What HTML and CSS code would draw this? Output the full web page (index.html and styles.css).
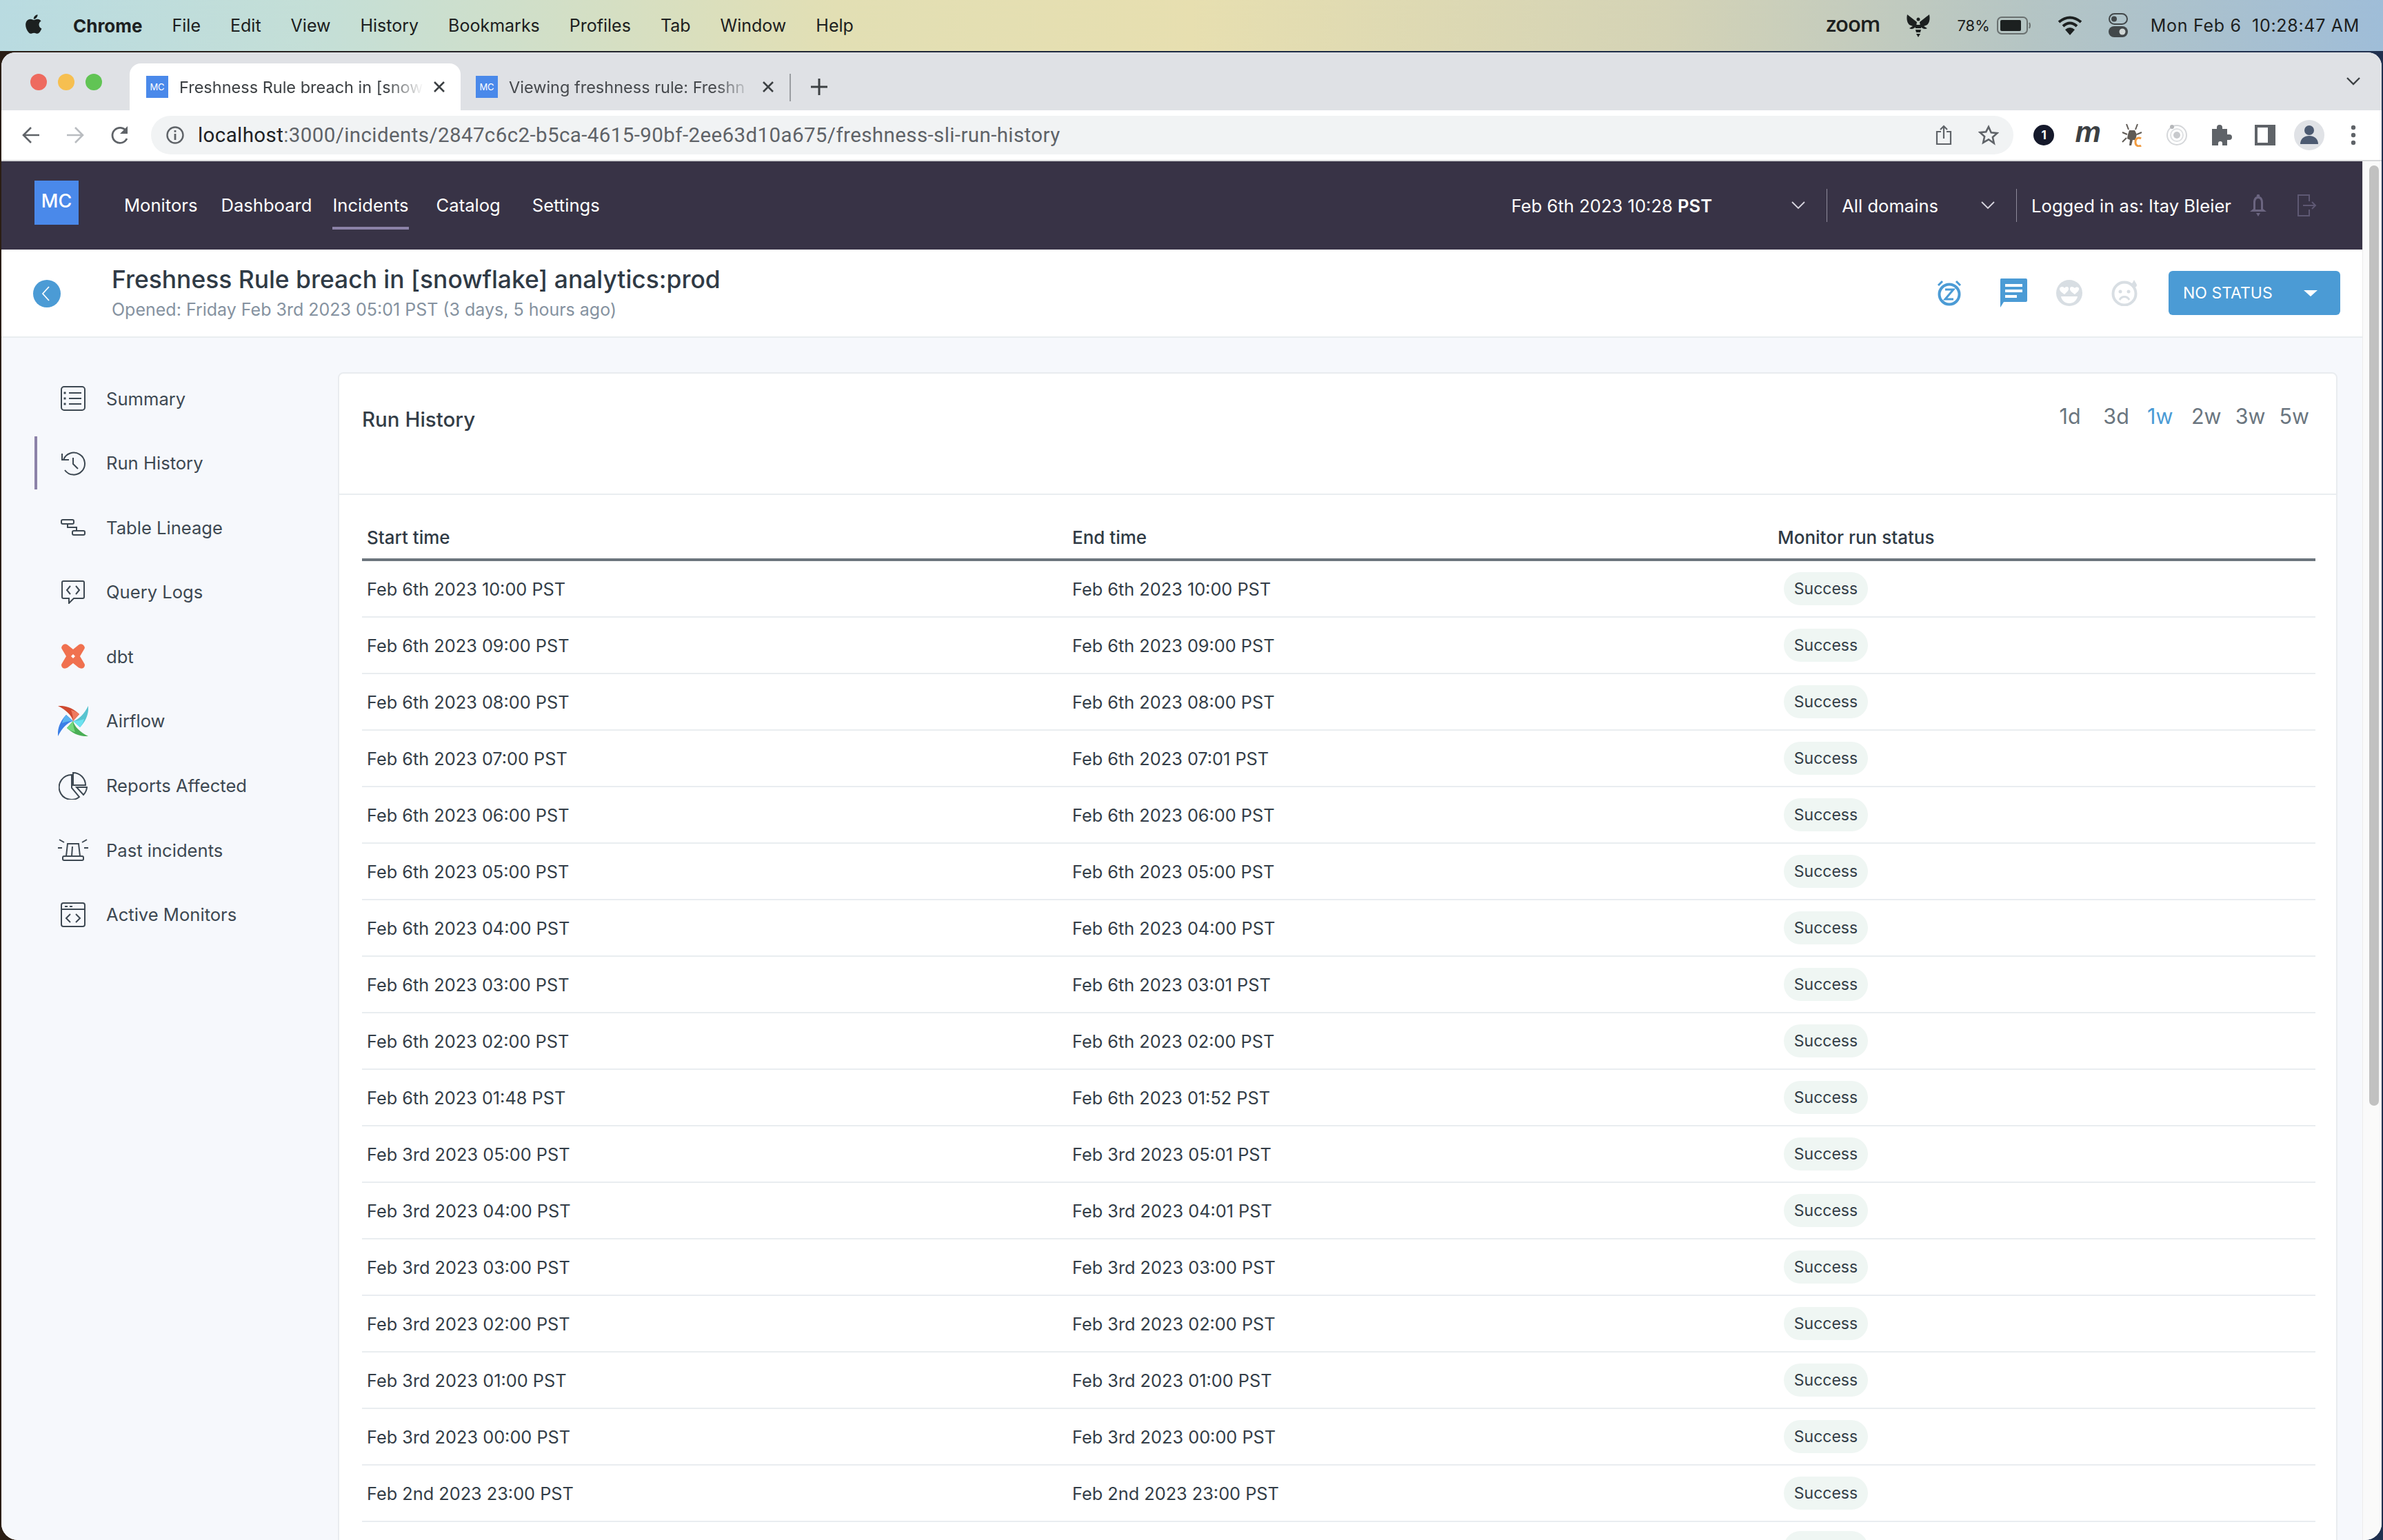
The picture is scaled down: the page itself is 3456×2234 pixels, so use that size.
FILE: index.html
```html
<!DOCTYPE html>
<html lang="en">
<head>
    <meta charset="UTF-8">
    <title>Freshness Rule breach in [snowflake] analytics:prod</title>
    <link rel="stylesheet" href="styles.css">
</head>
<body>
<div class="menubar">
    <div class="menu-left">
        <svg class="apple" width="30" height="36" viewBox="3 2.5 17 19"><path fill="#1c2020" d="M17.05 20.28c-.98.95-2.05.8-3.08.35-1.09-.46-2.09-.48-3.24 0-1.44.62-2.2.44-3.06-.35C2.79 15.25 3.51 7.59 9.05 7.31c1.35.07 2.29.74 3.08.8 1.18-.24 2.31-.93 3.57-.84 1.51.12 2.65.72 3.4 1.8-3.12 1.87-2.38 5.98.48 7.13-.57 1.5-1.31 2.99-2.54 4.09zM12.03 7.25c-.15-2.23 1.66-4.07 3.74-4.25.29 2.58-2.34 4.5-3.74 4.25z"/></svg>
        <b>Chrome</b><span>File</span><span>Edit</span><span>View</span><span>History</span><span>Bookmarks</span><span>Profiles</span><span>Tab</span><span>Window</span><span>Help</span>
    </div>
    <div class="menu-right">
        <span class="zoom-word">zoom</span>
        <svg width="36" height="36" viewBox="0 0 36 36"><path fill="#1c2020" d="M16 13 L2 2 Q0 12 5 17 L10 19 L5 22 Q10 25 15 19 Z M20 13 L34 2 Q36 12 31 17 L26 19 L31 22 Q26 25 21 19 Z"/><circle cx="18" cy="9" r="2.5" fill="#1c2020"/><path fill="#1c2020" d="M13 17h10l-1 5h-8zM14 24h8l-1 4h-6zM15 30h6l-3 5z"/></svg>
        <span class="battery-pct">78%</span>
        <svg width="50" height="26" viewBox="0 0 50 26"><rect x="1" y="1" width="43" height="24" rx="6" fill="none" stroke="#69706f" stroke-width="2"/><rect x="5" y="5" width="30" height="16" rx="2" fill="#1c2020"/><path d="M47 9 Q49 13 47 17" stroke="#69706f" stroke-width="2" fill="none"/></svg>
        <svg width="36" height="30" viewBox="0 0 36 30"><path fill="none" stroke="#1c2020" stroke-width="4" d="M2 10 Q18 -3 34 10M8 16 Q18 7 28 16"/><path fill="#1c2020" d="M18 29 L11 21 Q18 15 25 21Z"/></svg>
        <svg width="28" height="36" viewBox="0 0 28 36"><rect x="1" y="1" width="26" height="15" rx="7.5" fill="none" stroke="#42484a" stroke-width="2"/><circle cx="8" cy="8.5" r="4" fill="#42484a"/><rect y="19" width="28" height="16" rx="8" fill="#42484a"/><circle cx="20" cy="27" r="4.5" fill="#cfd6d5"/></svg>
        <span class="clock">Mon Feb 6&nbsp; 10:28:47 AM</span>
    </div>
</div>

<div class="window">
    <div class="tabstrip">
        <div class="lights"><i class="red"></i><i class="yellow"></i><i class="green"></i></div>
        <div class="tab tab-active">
            <span class="favicon">MC</span>
            <span class="tab-title">Freshness Rule breach in [snow</span>
            <svg class="tab-x" width="18" height="18" viewBox="0 0 18 18"><path stroke="#3c4043" stroke-width="2.6" d="M2 2l14 14M16 2L2 16"/></svg>
        </div>
        <div class="tab tab-back">
            <span class="favicon">MC</span>
            <span class="tab-title">Viewing freshness rule: Freshn</span>
            <svg class="tab-x" width="18" height="18" viewBox="0 0 18 18"><path stroke="#3c4043" stroke-width="2.6" d="M2 2l14 14M16 2L2 16"/></svg>
        </div>
        <div class="tab-sep"></div>
        <svg class="tab-plus" width="26" height="26" viewBox="0 0 26 26"><path stroke="#3c4043" stroke-width="3" d="M13 1v24M1 13h24"/></svg>
        <svg class="tab-down" width="20" height="12" viewBox="0 0 20 12"><path fill="none" stroke="#3c4043" stroke-width="2.4" d="M1 1l9 9 9-9"/></svg>
    </div>

    <div class="toolbar">
        <svg width="26" height="26" viewBox="0 0 26 26"><path fill="none" stroke="#5f6368" stroke-width="2.6" d="M25 13H3M13 2L2 13l11 11"/></svg>
        <svg width="26" height="26" viewBox="0 0 26 26"><path fill="none" stroke="#b9bcc0" stroke-width="2.6" d="M1 13h22M13 2l11 11-11 11"/></svg>
        <svg width="28" height="28" viewBox="0 0 28 28"><path fill="none" stroke="#5f6368" stroke-width="2.8" d="M24 19a11 11 0 1 1-1-11"/><path fill="#5f6368" d="M25 1v11H14z"/></svg>
        <div class="omnibox">
            <svg width="28" height="28" viewBox="0 0 28 28"><circle cx="14" cy="14" r="11.5" fill="none" stroke="#5f6368" stroke-width="2.4"/><path fill="#5f6368" d="M12.6 12h2.8v9h-2.8zM12.6 7h2.8v2.8h-2.8z"/></svg>
            <span class="url"><b>localhost</b>:3000/incidents/2847c6c2-b5ca-4615-90bf-2ee63d10a675/freshness-sli-run-history</span>
            <svg class="omni-share" width="24" height="30" viewBox="0 0 24 30"><path fill="none" stroke="#5f6368" stroke-width="2.2" d="M8 10H2v18h20V10h-6M12 20V2M7 7l5-5 5 5"/></svg>
            <svg class="omni-star" width="30" height="30" viewBox="0 0 30 30"><path fill="none" stroke="#5f6368" stroke-width="2.6" d="M15 3l3.700 8.200 8.800.9-6.600 5.900 1.900 8.800L15 21.300l-7.800 4.500 1.900-8.800-6.600-5.900 8.800-.9z"/></svg>
        </div>
        <div class="extensions">
            <div class="ext"><span class="ext-one">1</span></div>
            <div class="ext"><span class="ext-m">m</span></div>
            <div class="ext"><svg width="32" height="34" viewBox="0 0 32 34"><path fill="#5f5a55" d="M12 10h8l3 6-2 8h-4l-2 8h-3l1-8-4-2 1-6z"/><path stroke="#5f5a55" stroke-width="2" fill="none" d="M11 9L8 1M21 9l3-8M9 16L2 13M23 16l7-3M8 21L2 27"/><path fill="none" stroke="#f19a3e" stroke-width="3" d="M29 22a5 5 0 0 0-8 4v2a5 5 0 0 0 8 4"/></svg></div>
            <div class="ext"><svg width="32" height="34" viewBox="0 0 32 34"><circle cx="16" cy="17" r="14" fill="none" stroke="#d5d7da" stroke-width="2"/><circle cx="16" cy="17" r="9" fill="none" stroke="#dfe1e3" stroke-width="2"/><circle cx="16" cy="17" r="5" fill="#c8cacd"/><circle cx="9" cy="5" r="3" fill="#b5b7ba"/></svg></div>
            <div class="ext"><svg width="32" height="32" viewBox="0 0 32 32"><path fill="#5f6368" d="M3 7h7V5a4 4 0 0 1 8 0v2h7v8h3a4 4 0 0 1 0 8h-3v8h-7v-3a3 3 0 0 0-6 0v3H3z"/></svg></div>
            <div class="ext"><svg width="30" height="30" viewBox="0 0 30 30"><rect x="2" y="2" width="26" height="26" fill="none" stroke="#5f6368" stroke-width="4"/><rect x="19" y="2" width="9" height="26" fill="#5f6368"/></svg></div>
            <div class="ext"><svg width="44" height="44" viewBox="0 0 44 44"><circle cx="22" cy="22" r="22" fill="#e0e2e6"/><circle cx="22" cy="15" r="7" fill="#4c5a71"/><path fill="#4c5a71" d="M9 35c0-8 6-12 13-12s13 4 13 12z"/></svg></div>
            <div class="ext"><svg width="8" height="30" viewBox="0 0 8 30"><circle cx="4" cy="4" r="3.200" fill="#5f6368"/><circle cx="4" cy="15" r="3.200" fill="#5f6368"/><circle cx="4" cy="26" r="3.200" fill="#5f6368"/></svg></div>
        </div>
    </div>

    <div class="viewport">
        <div class="page">
            <div class="topnav">
                <div class="logo">MC</div>
                <a class="nav-link">Monitors</a>
                <a class="nav-link nav-dash">Dashboard</a>
                <a class="nav-link nav-current">Incidents</a>
                <a class="nav-link nav-catalog">Catalog</a>
                <a class="nav-link">Settings</a>
                <div class="nav-right">
                    <span class="nav-date">Feb 6th 2023 10:28 <b>PST</b></span>
                    <svg class="chev" width="20" height="12" viewBox="0 0 20 12"><path fill="none" stroke="#d8d6df" stroke-width="1.8" d="M1 1l9 9 9-9"/></svg>
                    <span class="nav-div"></span>
                    <span class="nav-domains">All domains</span>
                    <svg class="chev" width="20" height="12" viewBox="0 0 20 12"><path fill="none" stroke="#d8d6df" stroke-width="1.8" d="M1 1l9 9 9-9"/></svg>
                    <span class="nav-div"></span>
                    <span class="nav-user">Logged in as: Itay Bleier</span>
                    <svg class="nav-bell" width="26" height="32" viewBox="0 0 26 32"><path fill="#6b6580" d="M13 0a2 2 0 0 1 2 3c4 1 5 5 5 9v9l5 4H1l5-4v-9c0-4 1-8 5-9a2 2 0 0 1 2-3zM10 27h6l-3 5z"/><path fill="#383346" d="M13 6c3 0 4 3 4 6v10H9V12c0-3 1-6 4-6z"/></svg>
                    <svg class="nav-logout" width="28" height="32" viewBox="0 0 28 32"><path fill="none" stroke="#5e5873" stroke-width="2" d="M17 10V1H1v30h16v-9M8 16h18M21 11l5 5-5 5"/></svg>
                </div>
            </div>

            <div class="incident-head">
                <svg class="back" width="40" height="40" viewBox="0 0 40 40"><circle cx="20" cy="20" r="20" fill="#4b9bd5"/><path fill="none" stroke="#fff" stroke-width="1.800" d="M23 10L14 20l9 10"/></svg>
                <div class="incident-text">
                    <div class="incident-title">Freshness Rule breach in [snowflake] analytics:prod</div>
                    <div class="incident-sub">Opened: Friday Feb 3rd 2023 05:01 PST (3 days, 5 hours ago)</div>
                </div>
                <div class="incident-actions">
                    <svg width="38" height="38" viewBox="0 0 38 38"><circle cx="19" cy="21" r="14.500" fill="none" stroke="#4b9bd5" stroke-width="4"/><path fill="none" stroke="#4b9bd5" stroke-width="3" d="M3 8l6-6M35 8l-6-6"/><path fill="none" stroke="#4b9bd5" stroke-width="3" d="M13 14h12L13 28h12"/></svg>
                    <svg class="act-comment" width="40" height="42" viewBox="0 0 40 42"><path fill="#4b9bd5" d="M2 0h36a2 2 0 0 1 2 2v30a2 2 0 0 1-2 2H6l-5 8V2a2 2 0 0 1 1-2z"/><path fill="#fff" d="M8 8h25v4H8zM8 16h25v4H8zM8 24h17v4H8z"/></svg>
                    <svg width="38" height="38" viewBox="0 0 38 38"><circle cx="19" cy="19" r="19" fill="#d8dee3"/><path fill="#fff" d="M5 12c3-3 6-2 7 0 1-2 5-3 6 0 1 3-4 7-6 9-3-2-8-5-7-9zM20 12c1-3 5-2 7 0 1-2 5-2 6 0 1 4-4 7-6 9-3-2-8-5-7-9zM7 24h24c-1 6-6 10-12 10S8 30 7 24z"/></svg>
                    <svg width="38" height="38" viewBox="0 0 38 38"><circle cx="19" cy="20" r="16.500" fill="none" stroke="#d8dee3" stroke-width="4"/><circle cx="13" cy="17" r="2.500" fill="#d8dee3"/><circle cx="25" cy="17" r="2.500" fill="#d8dee3"/><path fill="none" stroke="#d8dee3" stroke-width="3" d="M12 29c3-6 11-6 14 0"/><path fill="#d8dee3" d="M33 0l4 7a4 4 0 0 1-8 0z"/></svg>
                    <div class="status-btn"><span>NO STATUS</span><i class="caret"></i></div>
                </div>
            </div>

            <div class="body-row">
                <div class="sidebar">
                    <div class="side-item">
                        <span class="side-icon"><svg width="36" height="36" viewBox="0 0 36 36" fill="none" stroke="#3d4852" stroke-width="2"><rect x="1" y="1" width="34" height="34" rx="4"/><path d="M12 10h18M12 18h18M12 26h18"/><path stroke-width="3" d="M6 8.500v3M6 16.500v3M6 24.500v3"/></svg></span>
                        Summary
                    </div>
                    <div class="side-item side-current">
                        <span class="side-icon"><svg width="36" height="36" viewBox="0 0 36 36" fill="none" stroke="#3d4852" stroke-width="2"><path d="M4 13A16 16 0 1 1 6 28M2 4v9h10M18 10v9l7 7"/></svg></span>
                        Run History
                    </div>
                    <div class="side-item">
                        <span class="side-icon"><svg width="36" height="24" viewBox="0 0 36 24" fill="none" stroke="#3d4852" stroke-width="2"><rect x="1" y="1" width="18" height="6" rx="2"/><rect x="17" y="17" width="18" height="6" rx="2"/><path d="M10 7v5h13v5"/></svg></span>
                        Table Lineage
                    </div>
                    <div class="side-item">
                        <span class="side-icon"><svg width="34" height="34" viewBox="0 0 34 34" fill="none" stroke="#3d4852" stroke-width="2"><path d="M3 1h28a2 2 0 0 1 2 2v21a2 2 0 0 1-2 2H18l-7 7v-7H3a2 2 0 0 1-2-2V3a2 2 0 0 1 2-2z"/><path d="M13 8l-5 6 5 6M21 8l5 6-5 6"/></svg></span>
                        Query Logs
                    </div>
                    <div class="side-item">
                        <span class="side-icon"><svg width="36" height="36" viewBox="0 0 36 36"><path fill="#f0714f" d="M4 1Q7-.5 10 1.500L18 8l8-6.500Q29-.5 32 1q4 3 2.500 6L28 18l6.500 11q1.500 3-1.500 6-3.500 1.500-7-.5L18 28l-8 6.500Q6.500 36.500 3 35q-3-3-1.500-6L8 18 1.500 7Q0 4 4 1z"/><path fill="#fff" d="M18 15l3 3-3 3-3-3z"/></svg></span>
                        dbt
                    </div>
                    <div class="side-item">
                        <span class="side-icon"><svg width="44" height="44" viewBox="0 0 44 44"><path fill="#cf4a30" d="M0 0C10-1 22 3 31 12L22 22C20 14 12 6 0 0z"/><path fill="#ee7b5f" d="M31 12L22 22c0-5-1-11-3-16 5 1 9 3 12 6z"/><path fill="#3b7fe6" d="M0 44C-1 34 3 22 12 13L22 22C14 24 6 32 0 44z"/><path fill="#5bb3f0" d="M12 13L22 22C17 22 11 23 6 25 7 20 9 16 12 13z"/><path fill="#58c4d0" d="M44 0C45 10 41 22 32 31L22 22C30 20 38 12 44 0z"/><path fill="#6ce2f0" d="M32 31L22 22c5 0 11-1 16-3-1 5-3 9-6 12z"/><path fill="#4aae55" d="M44 44C34 45 22 41 13 32L22 22C24 30 32 38 44 44z"/><path fill="#74d97e" d="M13 32L22 22c0 5 1 11 3 16-5-1-9-3-12-6z"/></svg></span>
                        Airflow
                    </div>
                    <div class="side-item">
                        <span class="side-icon"><svg width="42" height="40" viewBox="0 0 42 40" fill="none" stroke="#3d4852" stroke-width="2"><path d="M19 4A18 18 0 1 0 30 36L19 23z"/><path d="M21 1a18 18 0 0 1 18 18H21z"/><path d="M41 22H26l10 11a18 18 0 0 0 5-11z"/></svg></span>
                        Reports Affected
                    </div>
                    <div class="side-item">
                        <span class="side-icon"><svg width="44" height="32" viewBox="0 0 44 32" fill="none" stroke="#3d4852" stroke-width="2"><path d="M12 25l2-18h16l2 18M21 11l-1 14"/><rect x="7" y="25" width="30" height="6" rx="2"/><path d="M0 13h6M38 13h6M2 1l7 4M42 1l-7 4"/></svg></span>
                        Past incidents
                    </div>
                    <div class="side-item">
                        <span class="side-icon"><svg width="36" height="36" viewBox="0 0 36 36" fill="none" stroke="#3d4852" stroke-width="2"><rect x="1" y="1" width="34" height="34" rx="3"/><path d="M1 10h34M6 6h4M13 6h4"/><path d="M14 17l-6 6 6 6M22 17l6 6-6 6"/></svg></span>
                        Active Monitors
                    </div>
                </div>

                <div class="content">
                    <div class="card">
                        <div class="card-head">
                            <div class="card-title">Run History</div>
                            <div class="ranges"><span>1d</span><span>3d</span><span class="range-on">1w</span><span>2w</span><span>3w</span><span>5w</span></div>
                        </div>
                        <div class="runs">
                            <div class="run run-head"><div>Start time</div><div>End time</div><div>Monitor run status</div></div>
                            <div class="run"><div>Feb 6th 2023 10:00 PST</div><div>Feb 6th 2023 10:00 PST</div><div><span class="badge">Success</span></div></div>
                            <div class="run"><div>Feb 6th 2023 09:00 PST</div><div>Feb 6th 2023 09:00 PST</div><div><span class="badge">Success</span></div></div>
                            <div class="run"><div>Feb 6th 2023 08:00 PST</div><div>Feb 6th 2023 08:00 PST</div><div><span class="badge">Success</span></div></div>
                            <div class="run"><div>Feb 6th 2023 07:00 PST</div><div>Feb 6th 2023 07:01 PST</div><div><span class="badge">Success</span></div></div>
                            <div class="run"><div>Feb 6th 2023 06:00 PST</div><div>Feb 6th 2023 06:00 PST</div><div><span class="badge">Success</span></div></div>
                            <div class="run"><div>Feb 6th 2023 05:00 PST</div><div>Feb 6th 2023 05:00 PST</div><div><span class="badge">Success</span></div></div>
                            <div class="run"><div>Feb 6th 2023 04:00 PST</div><div>Feb 6th 2023 04:00 PST</div><div><span class="badge">Success</span></div></div>
                            <div class="run"><div>Feb 6th 2023 03:00 PST</div><div>Feb 6th 2023 03:01 PST</div><div><span class="badge">Success</span></div></div>
                            <div class="run"><div>Feb 6th 2023 02:00 PST</div><div>Feb 6th 2023 02:00 PST</div><div><span class="badge">Success</span></div></div>
                            <div class="run"><div>Feb 6th 2023 01:48 PST</div><div>Feb 6th 2023 01:52 PST</div><div><span class="badge">Success</span></div></div>
                            <div class="run"><div>Feb 3rd 2023 05:00 PST</div><div>Feb 3rd 2023 05:01 PST</div><div><span class="badge">Success</span></div></div>
                            <div class="run"><div>Feb 3rd 2023 04:00 PST</div><div>Feb 3rd 2023 04:01 PST</div><div><span class="badge">Success</span></div></div>
                            <div class="run"><div>Feb 3rd 2023 03:00 PST</div><div>Feb 3rd 2023 03:00 PST</div><div><span class="badge">Success</span></div></div>
                            <div class="run"><div>Feb 3rd 2023 02:00 PST</div><div>Feb 3rd 2023 02:00 PST</div><div><span class="badge">Success</span></div></div>
                            <div class="run"><div>Feb 3rd 2023 01:00 PST</div><div>Feb 3rd 2023 01:00 PST</div><div><span class="badge">Success</span></div></div>
                            <div class="run"><div>Feb 3rd 2023 00:00 PST</div><div>Feb 3rd 2023 00:00 PST</div><div><span class="badge">Success</span></div></div>
                            <div class="run"><div>Feb 2nd 2023 23:00 PST</div><div>Feb 2nd 2023 23:00 PST</div><div><span class="badge">Success</span></div></div>
                            <div class="run"><div></div><div></div><div><span class="badge"></span></div></div>
                        </div>
                    </div>
                </div>
            </div>
        </div>
        <div class="scrollbar"><div class="scroll-thumb"></div></div>
    </div>
</div>
</body>
</html>
```

FILE: styles.css
```css
html, body {
    margin: 0;
    height: 100%;
    overflow: hidden;
}
body {
    font-family: Inter, "Liberation Sans", sans-serif;
    background: linear-gradient(90deg, #2a1d14, #1b2a45 50%, #20304f);
    color: #333d47;
    display: flex;
    flex-direction: column;
}
svg {
    flex-shrink: 0;
    display: block;
}

/* mac menu bar */
.menubar {
    height: 74px;
    flex-shrink: 0;
    display: flex;
    align-items: center;
    justify-content: space-between;
    padding: 0 34px 0 35px;
    font-size: 25px;
    color: #1c2020;
    background: linear-gradient(90deg, #b9dbe1 0%, #c5dfd6 14%, #e2dfb4 35%, #e7dfb0 50%, #d4d3b6 70%, #b5c5c4 85%, #9fbdd8 100%);
}
.menu-left {
    display: flex;
    align-items: center;
    gap: 43px;
}
.menu-left b {
    font-size: 26px;
    margin-left: 2px;
}
.apple {
    margin-top: -4px;
    width: 26px;
}
.menu-right {
    display: flex;
    align-items: center;
    gap: 38px;
}
.zoom-word {
    font-family: "Open Sans", sans-serif;
    font-size: 31px;
    font-weight: 600;
    margin-top: -6px;
    letter-spacing: -1px;
}
.battery-pct {
    font-size: 22px;
    margin-right: -28px;
}
.clock {
    margin-left: -5px;
    letter-spacing: 0.7px;
}

/* browser */
.window {
    flex: 1;
    min-height: 0;
    margin: 2px 2px 0;
    display: flex;
    flex-direction: column;
    border-radius: 20px 20px 24px 24px;
    overflow: hidden;
    background: #fff;
}
.tabstrip {
    height: 84px;
    flex-shrink: 0;
    background: #dfe1e5;
    display: flex;
    align-items: flex-end;
}
.lights {
    display: flex;
    gap: 16px;
    width: 186px;
    box-sizing: border-box;
    padding: 0 0 29px 42px;
    height: 53px;
}
.lights i {
    width: 24px;
    height: 24px;
    border-radius: 50%;
}
.lights .red { background: #ee6a5f; }
.lights .yellow { background: #f6bf50; }
.lights .green { background: #61c454; }
.tab {
    width: 480px;
    height: 68px;
    box-sizing: border-box;
    padding: 0 23px 0 24px;
    display: flex;
    align-items: center;
    font-size: 23.5px;
    color: #45484c;
    border-radius: 16px 16px 0 0;
}
.tab-active {
    background: #fff;
    color: #3c4043;
}
.tab-back {
    margin-left: -2px;
}
.favicon {
    width: 32px;
    height: 32px;
    background: #4a89ea;
    color: #fff;
    font-size: 13px;
    display: flex;
    align-items: center;
    justify-content: center;
    flex-shrink: 0;
    margin-right: 16px;
}
.tab-title {
    flex: 1;
    white-space: nowrap;
    -webkit-mask-image: linear-gradient(90deg, #000 85%, transparent);
    mask-image: linear-gradient(90deg, #000 85%, transparent);
}
.tab-x {
    margin-left: 14px;
}
.tab-sep {
    width: 2px;
    height: 40px;
    background: #9a9da1;
    margin: 0 0 13px -1px;
}
.tab-plus {
    margin: 0 0 21px 28px;
}
.tab-down {
    margin: 0 31px 36px auto;
}
.toolbar {
    height: 72px;
    flex-shrink: 0;
    display: flex;
    align-items: center;
    padding-left: 30px;
    gap: 38px;
    border-bottom: 2px solid #d8d9db;
}
.omnibox {
    flex: 0 0 2701px;
    margin-left: -7px;
    height: 56px;
    border-radius: 28px;
    background: #f1f3f4;
    display: flex;
    align-items: center;
    padding: 0 21px;
    box-sizing: border-box;
    color: #5f6368;
}
.url {
    font-family: Roboto, sans-serif;
    font-size: 29.5px;
    margin-left: 19px;
    letter-spacing: 0.4px;
}
.url b {
    font-weight: 400;
    color: #202124;
}
.omni-share {
    margin-left: auto;
}
.omni-star {
    margin-left: 38px;
}
.extensions {
    display: flex;
    align-items: center;
    margin-left: -26px;
}
.ext {
    width: 64.2px;
    display: flex;
    justify-content: center;
    align-items: center;
}
.ext-one {
    width: 30px;
    height: 30px;
    border-radius: 50%;
    background: #15192b;
    color: #fff;
    font-size: 17px;
    font-weight: 700;
    display: flex;
    align-items: center;
    justify-content: center;
}
.ext-m {
    font-family: "Liberation Sans", sans-serif;
    font-size: 42px;
    font-weight: 700;
    font-style: italic;
    color: #3c4043;
    line-height: 30px;
    margin-top: -8px;
}

/* app */
.viewport {
    flex: 1;
    min-height: 0;
    display: flex;
    overflow: hidden;
}
.page {
    flex: 1;
    min-width: 0;
    background: #f6f8fc;
}
.scrollbar {
    width: 28px;
    flex-shrink: 0;
    box-sizing: border-box;
    padding: 6px 4px 0 9px;
    background: #fafafa;
    border-left: 1px solid #ececec;
}
.scroll-thumb {
    height: 1364px;
    background: #c1c1c1;
    border-radius: 8px;
}
.topnav {
    height: 128px;
    background: #383346;
    color: #fff;
    display: flex;
    align-items: center;
    padding-left: 48px;
    font-size: 25.6px;
}
.logo {
    width: 64px;
    height: 64px;
    background: #4a89ea;
    font-size: 27px;
    font-weight: 500;
    display: flex;
    align-items: center;
    justify-content: center;
    margin: -8px 66px 0 0;
    padding-bottom: 6px;
    box-sizing: border-box;
}
.nav-link {
    display: block;
    margin-right: 34px;
    padding: 0 0 14px;
    height: 34px;
    line-height: 34px;
    border-bottom: 4px solid transparent;
    margin-top: 18px;
}
.nav-dash {
    margin-right: 30px;
}
.nav-current {
    border-bottom-color: #8c82a8;
    margin-right: 40px;
}
.nav-catalog {
    margin-right: 46px;
}
.nav-right {
    margin-left: auto;
    display: flex;
    align-items: center;
    padding-right: 66px;
}
.nav-date b {
    font-weight: 600;
}
.nav-date {
    margin-right: 115px;
}
.nav-div {
    width: 1px;
    height: 48px;
    background: #8f8b9b;
    margin: 0 21px 0 31px;
}
.nav-domains {
    margin-right: 62px;
}
.nav-bell {
    margin-left: 26px;
}
.nav-logout {
    margin-left: 44px;
}
.incident-head {
    height: 128px;
    box-sizing: border-box;
    border-bottom: 2px solid #e9edf0;
    background: #fff;
    display: flex;
    align-items: center;
    padding: 0 32px 0 46px;
}
.back {
    margin-right: 74px;
    margin-top: 2px;
}
.incident-title {
    font-size: 35.4px;
    font-weight: 500;
    color: #2f3a45;
    line-height: 44px;
}
.incident-sub {
    font-size: 25px;
    color: #8592a0;
    line-height: 36px;
    margin-top: 3px;
}
.incident-actions {
    margin-left: auto;
    display: flex;
    align-items: center;
    gap: 42px;
}
.act-comment {
    margin-left: 12px;
}
.status-btn {
    width: 249px;
    height: 64px;
    box-sizing: border-box;
    background: #4b9bd5;
    color: #fff;
    border-radius: 6px;
    font-size: 23px;
    display: flex;
    align-items: center;
    justify-content: space-between;
    padding: 0 33px 0 21px;
    margin-left: 3px;
}
.caret {
    width: 0;
    height: 0;
    border-left: 10px solid transparent;
    border-right: 10px solid transparent;
    border-top: 9px solid #fff;
}
.body-row {
    display: flex;
    align-items: flex-start;
}
.sidebar {
    width: 488px;
    flex-shrink: 0;
    box-sizing: border-box;
    padding: 49.5px 0 0 48px;
    display: flex;
    flex-direction: column;
    gap: 16.6px;
}
.side-item {
    height: 77px;
    display: flex;
    align-items: center;
    gap: 30px;
    padding-left: 34px;
    border-left: 4px solid transparent;
    font-size: 25.6px;
    color: #3d4852;
}
.side-current {
    border-left-color: #8c82a8;
}
.side-icon {
    width: 36px;
    display: flex;
    justify-content: center;
}
.content {
    flex: 1;
    min-width: 0;
    padding: 50px 36px 0 0;
}
.card {
    background: #fff;
    border: 2px solid #e9ecef;
    border-radius: 8px 8px 0 0;
}
.card-head {
    height: 176px;
    box-sizing: border-box;
    border-bottom: 2px solid #e9edf0;
    padding: 44px 39px 0 33px;
    display: flex;
    justify-content: space-between;
    align-items: flex-start;
}
.card-title {
    font-size: 29.5px;
    font-weight: 500;
    color: #333d47;
    line-height: 44px;
}
.ranges {
    display: flex;
    font-size: 30.5px;
    color: #6b7680;
    line-height: 40px;
    margin-top: -2px;
}
.ranges span {
    width: 63.8px;
}
.ranges span:last-child {
    width: auto;
}
.range-on {
    color: #4b9bd5;
}
.runs {
    padding: 30px 30px 0 33px;
    font-size: 25.3px;
}
.run {
    display: grid;
    grid-template-columns: 1023px 1023px 1fr;
    align-items: center;
    height: 82px;
    box-sizing: border-box;
    border-bottom: 2px solid #e9edf0;
}
.run > div {
    padding-left: 7px;
}
.run-head {
    height: 66px;
    border-bottom: 4px solid #6c757d;
    font-size: 26px;
    font-weight: 500;
    color: #2f3a45;
}
.badge {
    display: inline-flex;
    align-items: center;
    justify-content: center;
    width: 122px;
    height: 48px;
    margin-left: 9px;
    border-radius: 24px;
    background: #eff6f3;
    font-size: 23px;
}
```
